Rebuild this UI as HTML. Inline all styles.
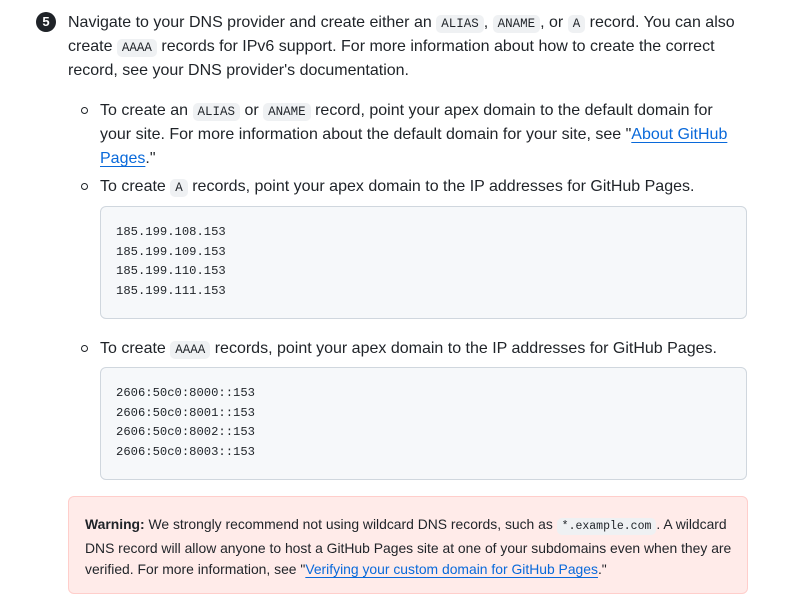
<!DOCTYPE html>
<html><head><meta charset="utf-8"><style>
body{margin:0;width:812px;height:603px;background:#fff;font-family:"Liberation Sans",sans-serif;color:#1f2328;position:relative;overflow:hidden}
.l{position:absolute;white-space:nowrap;font-size:16px;line-height:24px}
code{font-family:"Liberation Mono",monospace;font-size:12.5px;background:#eff1f3;border-radius:5px;padding:2px 5px}
a{color:#0969da;text-decoration:underline;text-underline-offset:3px}
.num{position:absolute;left:36px;top:12px;width:20px;height:20px;border-radius:50%;background:#1f2328;color:#fff;font-weight:bold;font-size:13px;text-align:center;line-height:20px}
.dot{position:absolute;width:5px;height:5px;border:1.5px solid #1f2328;border-radius:50%}
.pre{position:absolute;left:100px;width:647px;background:#f6f8fa;border:1px solid #d0d7de;border-radius:6px;font-family:"Liberation Mono",monospace;font-size:12.2px;line-height:19.7px;padding:16px 15px;box-sizing:border-box}
.warn{position:absolute;left:68px;top:496px;width:680px;height:98px;background:#ffebe9;border:1px solid #ffcecb;border-radius:6px;box-sizing:border-box;padding:17px 16px;font-size:13.9px;line-height:21.5px}
</style></head><body>
<div class="num">5</div>
<div class="l" style="left:68px;top:11px">Navigate to your DNS provider and create either an <code>ALIAS</code>, <code>ANAME</code>, or <code>A</code> record. You can also</div>
<div class="l" style="left:68px;top:35px">create <code>AAAA</code> records for IPv6 support. For more information about how to create the correct</div>
<div class="l" style="left:68px;top:59px">record, see your DNS provider's documentation.</div>
<div class="dot" style="left:81px;top:107px"></div>
<div class="l" style="left:100px;top:99px">To create an <code>ALIAS</code> or <code>ANAME</code> record, point your apex domain to the default domain for</div>
<div class="l" style="left:100px;top:123px">your site. For more information about the default domain for your site, see "<a>About GitHub</a></div>
<div class="l" style="left:100px;top:147px"><a>Pages</a>."</div>
<div class="dot" style="left:81px;top:183px"></div>
<div class="l" style="left:100px;top:175px">To create <code>A</code> records, point your apex domain to the IP addresses for GitHub Pages.</div>
<div class="pre" style="top:206px;height:113px">185.199.108.153<br>185.199.109.153<br>185.199.110.153<br>185.199.111.153</div>
<div class="dot" style="left:81px;top:345px"></div>
<div class="l" style="left:100px;top:337px">To create <code>AAAA</code> records, point your apex domain to the IP addresses for GitHub Pages.</div>
<div class="pre" style="top:367px;height:113px">2606:50c0:8000::153<br>2606:50c0:8001::153<br>2606:50c0:8002::153<br>2606:50c0:8003::153</div>
<div class="warn"><div style="white-space:nowrap"><b>Warning:</b> We strongly recommend not using wildcard DNS records, such as <code style="font-size:11.5px">*.example.com</code>. A wildcard</div><div style="white-space:nowrap">DNS record will allow anyone to host a GitHub Pages site at one of your subdomains even when they are</div><div style="white-space:nowrap">verified. For more information, see "<a>Verifying your custom domain for GitHub Pages</a>."</div></div>
</body></html>
